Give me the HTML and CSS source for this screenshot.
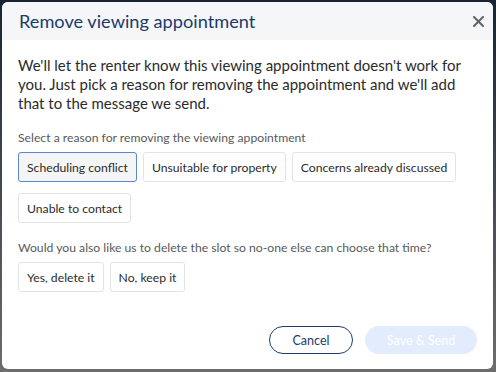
FILE: index.html
```html
<!DOCTYPE html>
<html lang="en">
<head>
    <meta charset="UTF-8">
    <meta name="viewport" content="width=device-width, initial-scale=1.0">
    <title>Remove viewing appointment</title>
    <link rel="stylesheet" href="styles.css">
</head>
<body>
    <div class="modal">
        <div class="modal-header">
            <h2>Remove viewing appointment</h2>
            <button class="close-button" aria-label="Close">
                <svg width="11" height="11" viewBox="0 0 11 11">
                    <path d="M1 1 L10 10 M10 1 L1 10" stroke="#5f6368" stroke-width="2" stroke-linecap="round"/>
                </svg>
            </button>
        </div>
        <div class="modal-body">
            <p class="intro">We'll let the renter know this viewing appointment doesn't work for you. Just pick a reason for removing the appointment and we'll add that to the message we send.</p>

            <p class="question">Select a reason for removing the viewing appointment</p>
            <div class="options">
                <button class="option selected">Scheduling conflict</button>
                <button class="option">Unsuitable for property</button>
                <button class="option">Concerns already discussed</button>
                <button class="option">Unable to contact</button>
            </div>

            <p class="question">Would you also like us to delete the slot so no-one else can choose that time?</p>
            <div class="options">
                <button class="option">Yes, delete it</button>
                <button class="option">No, keep it</button>
            </div>
        </div>
        <div class="modal-footer">
            <button class="pill cancel">Cancel</button>
            <button class="pill save" disabled>Save &amp; Send</button>
        </div>
    </div>
</body>
</html>
```

FILE: styles.css
```css
* {
    margin: 0;
    padding: 0;
    box-sizing: border-box;
}

body, html {
    width: 100%;
    height: 100%;
    overflow: hidden;
    font-family: Lato, "Noto Sans", sans-serif;
}

body {
    background: linear-gradient(to bottom, #1b2233 0%, #3c414c 40%, #6d6d6d 100%);
    padding: 2px 3px 3px 2px;
}

.modal {
    background-color: #fff;
    border-radius: 6px;
    height: 100%;
    display: flex;
    flex-direction: column;
    overflow: hidden;
}

.modal-header {
    background-color: #f5f6f7;
    height: 38px;
    display: flex;
    align-items: center;
    justify-content: space-between;
    padding: 0 3px 0 17px;
}

.modal-header h2 {
    font-size: 18.2px;
    font-weight: 400;
    color: #1c3a6c;
}

.close-button {
    background: none;
    border: none;
    width: 24px;
    height: 24px;
    display: flex;
    align-items: center;
    justify-content: center;
    cursor: pointer;
}

.modal-body {
    padding: 16px 16px 0 16px;
    flex: 1;
}

.intro {
    font-size: 15px;
    line-height: 19px;
    color: #2b2b2b;
    margin-bottom: 17px;
}

.question {
    font-size: 12.2px;
    color: #5a5a5a;
    margin-bottom: 7px;
}

.options {
    display: flex;
    flex-wrap: wrap;
    gap: 11px 6px;
    margin-bottom: 17px;
}

.option {
    font-family: inherit;
    font-size: 12.2px;
    color: #2b2b2b;
    background-color: #fff;
    border: 1px solid #e3e3e3;
    border-radius: 3px;
    height: 30px;
    padding: 0 8px;
    cursor: pointer;
}

.option.selected {
    background-color: #f5f5f5;
    border-color: #5b87d0;
}

.modal-footer {
    display: flex;
    justify-content: flex-end;
    gap: 12px;
    padding: 0 16px 15px 0;
}

.pill {
    font-family: inherit;
    font-size: 12.5px;
    height: 28px;
    border-radius: 14px;
    cursor: pointer;
}

.cancel {
    width: 84px;
    background-color: #fff;
    border: 1px solid #1c3a6c;
    color: #1c3a6c;
}

.save {
    width: 112px;
    background-color: #e3ecfd;
    border: none;
    color: #fff;
}
```
